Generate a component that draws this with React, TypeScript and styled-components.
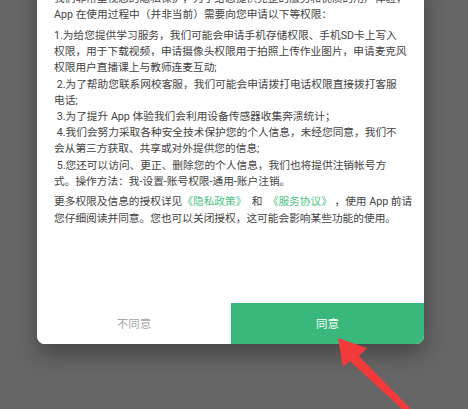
import React from "react";
import styled, { createGlobalStyle } from "styled-components";

const Global = createGlobalStyle`
  html, body { margin: 0; padding: 0; }
  body { background: #666666; }
`;

const Screen = styled.div`
  position: relative;
  width: 468px;
  height: 409px;
  overflow: hidden;
  background: #666666;
  padding: 0 44px 0 37px;
  box-sizing: border-box;
  font-family: Roboto, "Noto Sans CJK SC", "Noto Sans", sans-serif;
`;

const Dialog = styled.div`
  margin-top: -29px;
  background: #ffffff;
  border-radius: 0 0 8px 8px;
  overflow: hidden;
  box-shadow: 0 10px 22px rgba(0, 0, 0, 0.32);
  display: flex;
  flex-direction: column;
`;

const Body = styled.div`
  padding: 20px 17px 76px 17px;
  display: flex;
  flex-direction: column;
  gap: 4.5px;
`;

const Para = styled.p`
  margin: 0;
  font-size: 10.7px;
  line-height: 16.2px;
  color: #434343;
  white-space: pre;
`;

const Link = styled.span`
  color: #4fc483;
`;

const Footer = styled.div`
  display: grid;
  grid-template-columns: 194px 1fr;
  height: 41px;
`;

const Button = styled.button<{ $primary?: boolean }>`
  border: none;
  margin: 0;
  padding: 0;
  font-family: Roboto, "Noto Sans CJK SC", sans-serif;
  font-size: 11.5px;
  display: flex;
  align-items: center;
  justify-content: center;
  background: ${(p) => (p.$primary ? "#3ab77c" : "#ffffff")};
  color: ${(p) => (p.$primary ? "#ffffff" : "#a8a8a8")};
`;

const Arrow = styled.svg`
  position: absolute;
  left: 0;
  top: 0;
  pointer-events: none;
`;

export default function App() {
  return (
    <>
      <Global />
      <Screen>
        <Dialog>
          <Body>
            <Para>
              {"我们非常重视您的隐私保护，为了给您提供完整的服务和优质的用户体验，\nApp 在使用过程中（并非当前）需要向您申请以下等权限："}
            </Para>
            <Para>
              {"1.为给您提供学习服务，我们可能会申请手机存储权限、手机SD卡上写入\n" +
                "权限，用于下载视频，申请摄像头权限用于拍照上传作业图片，申请麦克风\n" +
                "权限用户直播课上与教师连麦互动;\n" +
                " 2.为了帮助您联系网校客服，我们可能会申请拨打电话权限直接拨打客服\n" +
                "电话;\n" +
                " 3.为了提升 App 体验我们会利用设备传感器收集奔溃统计；\n" +
                " 4.我们会努力采取各种安全技术保护您的个人信息，未经您同意，我们不\n" +
                "会从第三方获取、共享或对外提供您的信息;\n" +
                " 5.您还可以访问、更正、删除您的个人信息，我们也将提供注销帐号方\n" +
                "式。操作方法：我-设置-账号权限-通用-账户注销。"}
            </Para>
            <Para>
              更多权限及信息的授权详见<Link>《隐私政策》</Link>{"  和  "}<Link>《服务协议》</Link>
              {" ，使用 App 前请\n您仔细阅读并同意。您也可以关闭授权，这可能会影响某些功能的使用。"}
            </Para>
          </Body>
          <Footer>
            <Button>不同意</Button>
            <Button $primary>同意</Button>
          </Footer>
        </Dialog>
        <Arrow width="468" height="409" viewBox="0 0 468 409">
          <polygon
            points="338,338 367,348 359,356 411,409 402,409 350,361 343,367"
            fill="#f33a3a"
          />
        </Arrow>
      </Screen>
    </>
  );
}
